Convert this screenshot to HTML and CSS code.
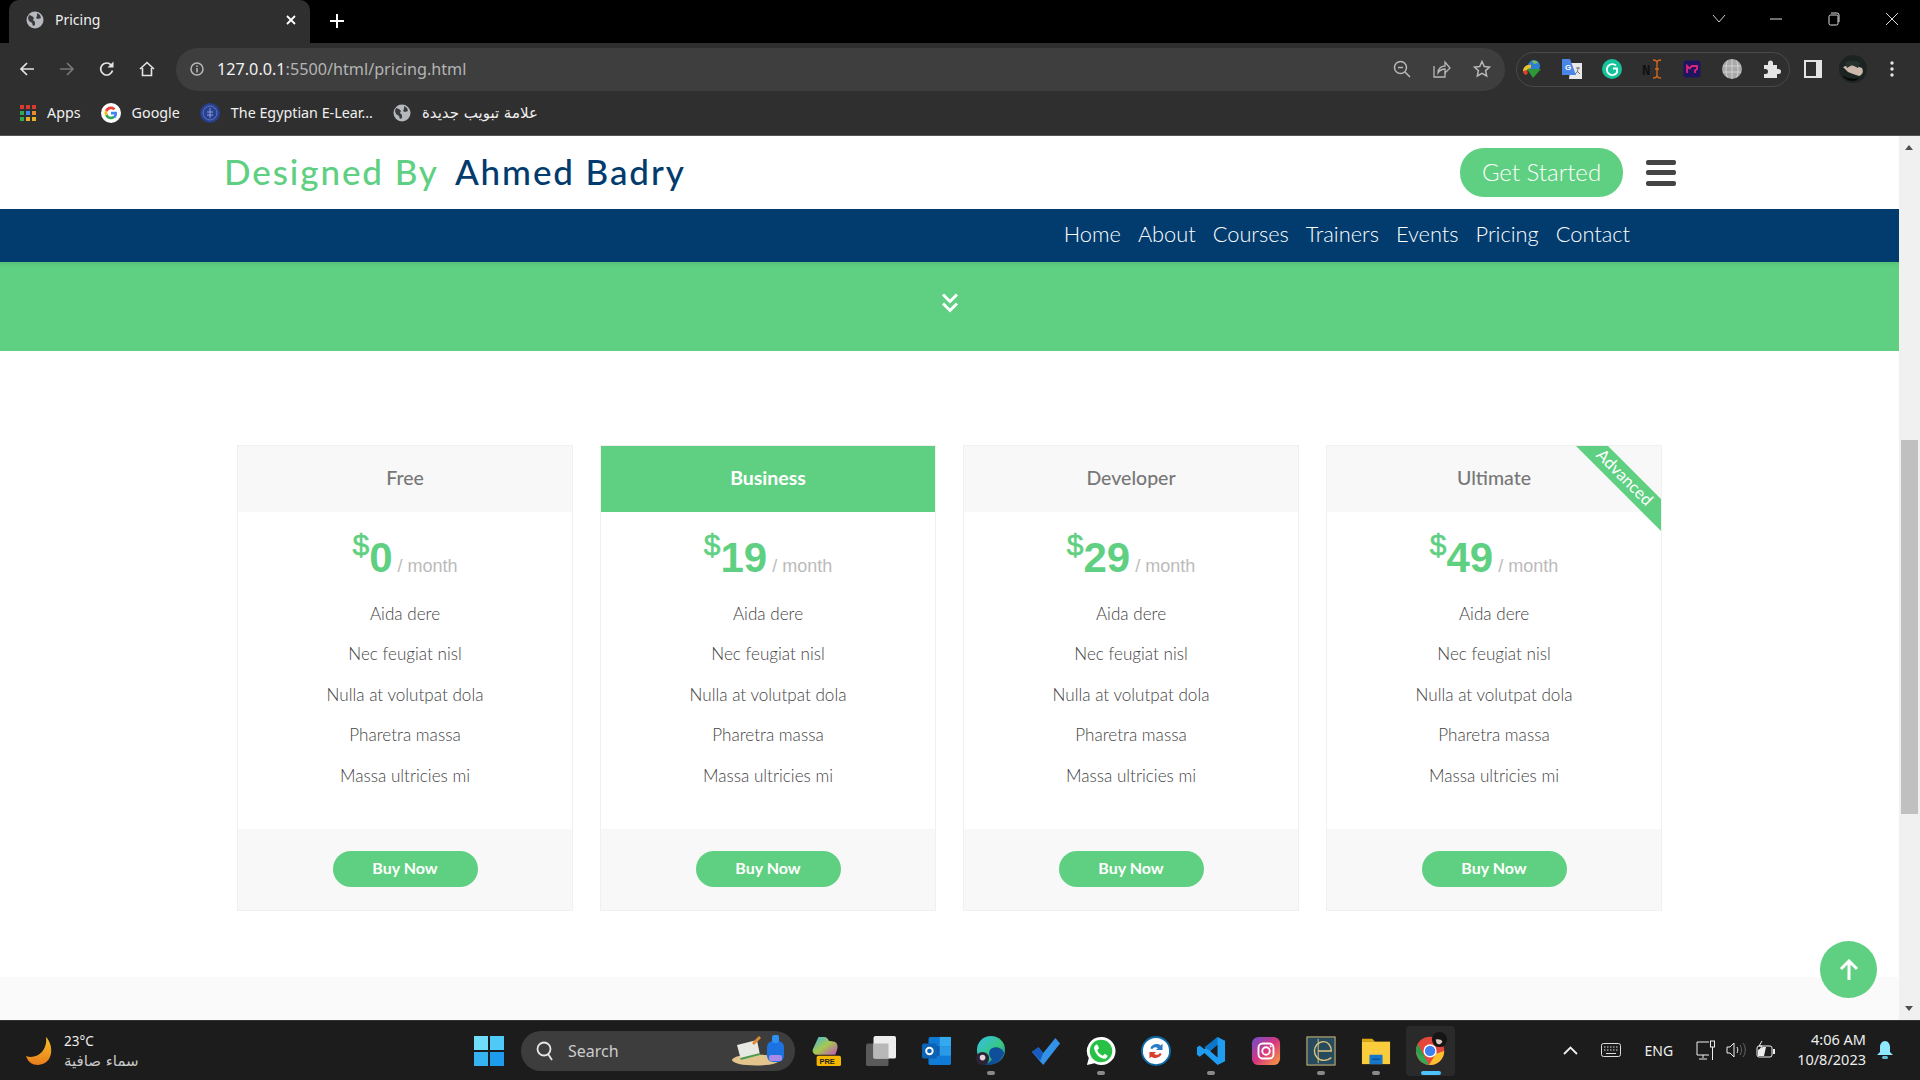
FILE: index.html
```html
<!DOCTYPE html>
<html lang="en">
<head>
    <meta charset="UTF-8">
    <meta name="viewport" content="width=device-width, initial-scale=1.0">
    <title>Pricing</title>
    <link rel="stylesheet" href="styles.css">
</head>
<body>
<div class="window">

    <!-- tab strip -->
    <div class="tabstrip">
        <div class="tab">
            <svg class="globe" width="18" height="18" viewBox="0 0 18 18"><circle cx="9" cy="9" r="8.5" fill="#b5b8bd"/><path d="M3 4l3 1 2 2-1 2 2 2v3l-2 1-1-3-3-2-1-3zM11 2l3 2 1 3-3 1-2-1 1-2z" fill="#3a3b3d"/></svg>
            <span class="tab-title">Pricing</span>
            <svg class="tab-close" width="12" height="12" viewBox="0 0 12 12"><path d="M2 2l8 8M10 2l-8 8" stroke="#fff" stroke-width="1.8"/></svg>
        </div>
        <svg class="new-tab" width="16" height="16" viewBox="0 0 16 16"><path d="M8 1v14M1 8h14" stroke="#fff" stroke-width="2"/></svg>
        <div class="window-btns">
            <svg width="14" height="10" viewBox="0 0 14 10"><path d="M1 1l6 7 6-7" fill="none" stroke="#ccc"/></svg>
            <svg width="12" height="2" viewBox="0 0 12 2"><path d="M0 1h12" stroke="#ddd"/></svg>
            <svg width="12" height="14" viewBox="0 0 12 14"><rect x="1" y="3" width="9" height="10" rx="1.5" fill="none" stroke="#ddd"/><path d="M3 1h6a2 2 0 0 1 2 2v7" fill="none" stroke="#ddd"/></svg>
            <svg width="12" height="12" viewBox="0 0 12 12"><path d="M0 0l12 12M12 0L0 12" stroke="#ddd"/></svg>
        </div>
    </div>

    <!-- toolbar -->
    <div class="toolbar">
        <div class="nav-btns">
            <svg width="16" height="16" viewBox="0 0 16 16"><path d="M15 8H2M8 2L2 8l6 6" fill="none" stroke="#e4e4e4" stroke-width="1.7"/></svg>
            <svg width="16" height="16" viewBox="0 0 16 16"><path d="M1 8h13M8 2l6 6-6 6" fill="none" stroke="#777" stroke-width="1.7"/></svg>
            <svg width="16" height="16" viewBox="0 0 16 16"><path d="M13.5 9.5A6 6 0 1 1 12 3.8" fill="none" stroke="#e4e4e4" stroke-width="1.7"/><path d="M14.5 0.5v6h-6z" fill="#e4e4e4"/></svg>
            <svg width="16" height="16" viewBox="0 0 16 16"><path d="M1 8l7-6.5L15 8M3.500 7v7.500h9V7" fill="none" stroke="#e4e4e4" stroke-width="1.6"/></svg>
        </div>
        <div class="omnibox">
            <svg width="14" height="14" viewBox="0 0 14 14"><circle cx="7" cy="7" r="6" fill="none" stroke="#b8b8b8" stroke-width="1.5"/><path d="M7 6v4.500M7 3.500V5" stroke="#b8b8b8" stroke-width="1.5"/></svg>
            <span class="url"><b>127.0.0.1</b>:5500/html/pricing.html</span>
            <div class="omni-icons">
                <svg width="18" height="18" viewBox="0 0 18 18"><circle cx="7.5" cy="7.5" r="6" fill="none" stroke="#b8b8b8" stroke-width="1.5"/><path d="M12 12l5 5M5 7.500h5" stroke="#b8b8b8" stroke-width="1.5"/></svg>
                <svg width="18" height="18" viewBox="0 0 18 18"><path d="M1 6v11h11v-4" fill="none" stroke="#b8b8b8" stroke-width="1.3"/><path d="M5 13c0-5 4-7 7-7V2l5 6-5 5V9c-3 0-5 1-7 4z" fill="none" stroke="#b8b8b8" stroke-width="1.3"/></svg>
                <svg width="18" height="18" viewBox="0 0 18 18"><path d="M9 1.500l2.300 5 5.200.6-3.900 3.500 1.100 5.400L9 13.300 4.300 16l1.100-5.400L1.500 7.100l5.200-.6z" fill="none" stroke="#b8b8b8" stroke-width="1.5"/></svg>
            </div>
        </div>
        <div class="ext-pill">
            <svg width="20" height="20" viewBox="0 0 20 20"><circle cx="12" cy="7" r="6" fill="#2f7fd0"/><path d="M10 2c2-1 5 0 6 2l-4 1z" fill="#7cc04b"/><path d="M1 12c0-4 4-7 8-6v3c-2 0-4 1-4 4z" fill="#e9c22c"/><path d="M1 12c0 2 1 3 3 4l2-2c-1-1-1-2-1-3z" fill="#d8432f"/><path d="M5 10h14l-8 9z" fill="#2e9a37"/></svg>
            <svg width="20" height="20" viewBox="0 0 20 20"><path d="M9 4h11v16H7z" fill="#e8e8e8"/><path d="M14 9h4M16 8v1c0 3-1 5-3 6M15 12l3 3" fill="none" stroke="#777"/><path d="M0 0h8l6 16H0z" fill="#4a86e8"/><text x="3" y="11" class="ext-letter">G</text></svg>
            <svg width="20" height="20" viewBox="0 0 20 20"><circle cx="10" cy="10" r="10" fill="#15c39a"/><path d="M14 6.500A5.500 5.500 0 1 0 15 13.500v-4h-4" fill="none" stroke="#fff" stroke-width="1.800"/></svg>
            <svg width="20" height="20" viewBox="0 0 20 20"><text x="0" y="16" class="ext-mono">N</text><path d="M11 1c2 0 4 1 4 3v12c0 2 2 3 4 3M19 1c-2 0-4 1-4 3M11 19c2 0 4-1 4-3M13 10h4" fill="none" stroke="#d9691e" stroke-width="1.300"/></svg>
            <svg width="20" height="20" viewBox="0 0 20 20"><rect x="1.500" y="1.500" width="17" height="17" rx="3" fill="#1e1560"/><path d="M5 14V7l2.500 2.500L10 7h5v3l-2 1.500V14" fill="none" stroke="#e0267a" stroke-width="1.800"/></svg>
            <svg width="20" height="20" viewBox="0 0 20 20"><circle cx="10" cy="10" r="10" fill="#a8a8a8"/><path d="M1 7h18M1 13h18M10 0v20M5.500 1.500c-2 5-2 12 0 17M14.500 1.500c2 5 2 12 0 17" fill="none" stroke="#dcdcdc" stroke-width=".8"/></svg>
            <svg width="20" height="20" viewBox="0 0 20 20"><path d="M2 6h4V4a2.500 2.500 0 0 1 5 0v2h4v4h1.500a2.500 2.500 0 0 1 0 5H15v4H2v-4h1.500a2.500 2.500 0 0 0 0-5H2z" fill="#e4e4e4"/></svg>
        </div>
        <svg class="side-panel" width="18" height="18" viewBox="0 0 18 18"><rect x="1" y="1" width="16" height="16" fill="none" stroke="#e4e4e4" stroke-width="2"/><rect x="12" y="1" width="5" height="16" fill="#e4e4e4"/></svg>
        <svg class="avatar" width="28" height="28" viewBox="0 0 28 28"><circle cx="14" cy="14" r="14" fill="#1c2421"/><path d="M4 12c6-3 13-2 19 1 2 4 0 7-3 8l-6-2-5-2z" fill="#cbb9ac"/><path d="M6 8c5-3 11-3 15 0l-2 5-6-3-5 3z" fill="#26332e"/><path d="M3 20c4 3 10 5 17 3-5 5-13 3-17-3z" fill="#060606"/></svg>
        <svg class="menu-dots" width="4" height="16" viewBox="0 0 4 16"><circle cx="2" cy="2" r="1.700" fill="#e4e4e4"/><circle cx="2" cy="8" r="1.700" fill="#e4e4e4"/><circle cx="2" cy="14" r="1.700" fill="#e4e4e4"/></svg>
    </div>

    <!-- bookmarks -->
    <div class="bookmarks">
        <div class="bookmark">
            <svg width="16" height="16" viewBox="0 0 16 16">
                <rect x="0" y="0" width="4" height="4" fill="#d93a2f"/><rect x="6" y="0" width="4" height="4" fill="#d93a2f"/><rect x="12" y="0" width="4" height="4" fill="#d93a2f"/>
                <rect x="0" y="6" width="4" height="4" fill="#33a853"/><rect x="6" y="6" width="4" height="4" fill="#4285f4"/><rect x="12" y="6" width="4" height="4" fill="#e88b2a"/>
                <rect x="0" y="12" width="4" height="4" fill="#33a853"/><rect x="6" y="12" width="4" height="4" fill="#e8b02a"/><rect x="12" y="12" width="4" height="4" fill="#e8b02a"/>
            </svg>
            <span>Apps</span>
        </div>
        <div class="bookmark">
            <svg width="20" height="20" viewBox="0 0 20 20"><circle cx="10" cy="10" r="10" fill="#fff"/><path d="M15.800 8.700H10v2.700h3.300a3.500 3.500 0 0 1-1.400 2.100l2.200 1.700c1.300-1.200 2-3 2-4.900z" fill="#4285f4"/><path d="M10 16.200c1.700 0 3.100-.6 4.100-1.500l-2.200-1.700a3.700 3.700 0 0 1-5.500-1.900L4.200 12.800a6.200 6.200 0 0 0 5.800 3.400z" fill="#34a853"/><path d="M6.400 11.100a3.700 3.700 0 0 1 0-2.300L4.200 7.100a6.200 6.200 0 0 0 0 5.700z" fill="#fbbc05"/><path d="M10 6.300c.9 0 1.800.3 2.500 1l1.900-1.900A6.200 6.200 0 0 0 4.200 7.100l2.200 1.700A3.700 3.700 0 0 1 10 6.300z" fill="#ea4335"/></svg>
            <span>Google</span>
        </div>
        <div class="bookmark">
            <svg width="20" height="20" viewBox="0 0 20 20"><circle cx="10" cy="10" r="10" fill="#27408f"/><circle cx="10" cy="10" r="7" fill="none" stroke="#6176bd"/><path d="M10 5v10M7 9h6M7 12h6" stroke="#8fa0d8"/></svg>
            <span>The Egyptian E-Lear...</span>
        </div>
        <div class="bookmark">
            <svg width="18" height="18" viewBox="0 0 18 18"><circle cx="9" cy="9" r="8.500" fill="#b5b8bd"/><path d="M3 4l3 1 2 2-1 2 2 2v3l-2 1-1-3-3-2-1-3zM11 2l3 2 1 3-3 1-2-1 1-2z" fill="#3a3b3d"/></svg>
            <span class="arabic bookmark-ar" dir="rtl">علامة تبويب جديدة</span>
        </div>
    </div>

    <!-- page -->
    <div class="viewport">
        <div class="page">
            <header class="site-header">
                <div class="logo"><span class="logo-green">Designed By</span><span class="logo-navy">Ahmed Badry</span></div>
                <div class="header-actions">
                    <a class="get-started">Get Started</a>
                    <div class="burger"><span></span><span></span><span></span></div>
                </div>
            </header>

            <nav class="site-nav">
                <a>Home</a><a>About</a><a>Courses</a><a>Trainers</a><a>Events</a><a>Pricing</a><a>Contact</a>
            </nav>

            <div class="breadcrumb-band">
                <svg width="18" height="20" viewBox="0 0 18 20"><path d="M2 1.500l7 7 7-7M2 10.500l7 7 7-7" fill="none" stroke="#fff" stroke-width="3"/></svg>
            </div>

            <section class="pricing">
                <div class="plan">
                    <h3 class="plan-name">Free</h3>
                    <div class="plan-price"><sup>$</sup><strong>0</strong><span> / month</span></div>
                    <ul class="plan-features">
                        <li>Aida dere</li><li>Nec feugiat nisl</li><li>Nulla at volutpat dola</li><li>Pharetra massa</li><li>Massa ultricies mi</li>
                    </ul>
                    <div class="plan-foot"><a class="buy">Buy Now</a></div>
                </div>
                <div class="plan featured">
                    <h3 class="plan-name">Business</h3>
                    <div class="plan-price"><sup>$</sup><strong>19</strong><span> / month</span></div>
                    <ul class="plan-features">
                        <li>Aida dere</li><li>Nec feugiat nisl</li><li>Nulla at volutpat dola</li><li>Pharetra massa</li><li>Massa ultricies mi</li>
                    </ul>
                    <div class="plan-foot"><a class="buy">Buy Now</a></div>
                </div>
                <div class="plan">
                    <h3 class="plan-name">Developer</h3>
                    <div class="plan-price"><sup>$</sup><strong>29</strong><span> / month</span></div>
                    <ul class="plan-features">
                        <li>Aida dere</li><li>Nec feugiat nisl</li><li>Nulla at volutpat dola</li><li>Pharetra massa</li><li>Massa ultricies mi</li>
                    </ul>
                    <div class="plan-foot"><a class="buy">Buy Now</a></div>
                </div>
                <div class="plan">
                    <div class="ribbon"><span>Advanced</span></div>
                    <h3 class="plan-name">Ultimate</h3>
                    <div class="plan-price"><sup>$</sup><strong>49</strong><span> / month</span></div>
                    <ul class="plan-features">
                        <li>Aida dere</li><li>Nec feugiat nisl</li><li>Nulla at volutpat dola</li><li>Pharetra massa</li><li>Massa ultricies mi</li>
                    </ul>
                    <div class="plan-foot"><a class="buy">Buy Now</a></div>
                </div>
            </section>

            <div class="next-section"></div>

            <a class="back-top">
                <svg width="20" height="22" viewBox="0 0 20 22"><path d="M10 21V3M2 10l8-8 8 8" fill="none" stroke="#fff" stroke-width="3"/></svg>
            </a>
        </div>

        <div class="scrollbar">
            <div class="arrow-up"></div>
            <div class="thumb"></div>
            <div class="arrow-down"></div>
        </div>
    </div>

    <!-- taskbar -->
    <div class="taskbar">
        <div class="weather">
            <svg width="28" height="30" viewBox="0 0 28 30"><defs><linearGradient id="moon" x1="0" y1="0" x2="0" y2="1"><stop offset="0" stop-color="#f6c026"/><stop offset="1" stop-color="#ea7d1c"/></linearGradient></defs><path d="M20 1c8 8 8 27-8 28C6 29 2 26 0 20c10 4 22-5 20-19z" fill="url(#moon)"/></svg>
            <div class="weather-text">
                <span>23°C</span>
                <span class="arabic weather-ar" dir="rtl">سماء صافية</span>
            </div>
        </div>

        <div class="task-center">
            <svg class="win-logo" width="30" height="30" viewBox="0 0 30 30"><rect width="14" height="14" fill="#6fdcfb"/><rect x="16" width="14" height="14" fill="#4fc9f8"/><rect y="16" width="14" height="14" fill="#35b3f3"/><rect x="16" y="16" width="14" height="14" fill="#1e9cec"/></svg>
            <div class="search">
                <svg width="18" height="20" viewBox="0 0 18 20"><circle cx="8" cy="8" r="6.500" fill="none" stroke="#e6e6e6" stroke-width="1.800"/><path d="M12 13l4 6" stroke="#e6e6e6" stroke-width="1.800"/></svg>
                <span>Search</span>
                <svg class="search-art" width="54" height="31" viewBox="0 0 54 31"><ellipse cx="24" cy="25" rx="24" ry="5.500" fill="#e3c48c"/><path d="M5 10l20-5 3 15-19 5z" fill="#e9e9e3"/><path d="M8 23l20-5v2L9 25z" fill="#4f9b4b"/><path d="M20 8l7-7 2 2-7 7z" fill="#e08a34"/><rect x="35" y="6" width="17" height="21" rx="6" fill="#1b72e0"/><rect x="40" y="0" width="7" height="8" rx="2" fill="#2e90f0"/><rect x="37" y="20" width="13" height="6" rx="2" fill="#a98ae6"/></svg>
            </div>
            <div class="task-icons">
                <div class="task-icon">
                    <svg width="32" height="32" viewBox="0 0 32 32"><defs><linearGradient id="cop" x1="0" y1="0" x2="1" y2="1"><stop offset="0" stop-color="#3fb7e8"/><stop offset=".5" stop-color="#a7c94e"/><stop offset="1" stop-color="#c34fc0"/></linearGradient></defs><path d="M8 1h6c3 0 4 2 5 4l6 1c3 1 4 4 3 8l-2 6H7c-4 0-6-3-5-6z" fill="url(#cop)"/><rect x="6" y="21" width="26" height="11" rx="2" fill="#f5b800"/><text x="9" y="30" class="pre-text">PRE</text></svg>
                </div>
                <div class="task-icon">
                    <svg width="32" height="32" viewBox="0 0 32 32"><rect y="8" width="24" height="24" rx="2" fill="#5a5a5a"/><rect x="8" width="24" height="24" rx="2" fill="#ededed"/><rect x="8" y="8" width="16" height="16" fill="#b8b8b8"/></svg>
                </div>
                <div class="task-icon">
                    <svg width="32" height="32" viewBox="0 0 32 32"><rect x="8" y="1" width="24" height="30" rx="2" fill="#0f7bd6"/><rect x="20" y="1" width="12" height="10" fill="#35a9ee"/><rect x="8" y="11" width="12" height="10" fill="#0a5ea8"/><rect x="20" y="11" width="12" height="10" fill="#2a9ae6"/><rect x="1" y="8" width="16" height="16" rx="2" fill="#0c63b4"/><circle cx="9" cy="16" r="3.500" fill="none" stroke="#fff" stroke-width="2"/></svg>
                </div>
                <div class="task-icon running">
                    <svg width="32" height="32" viewBox="0 0 32 32"><defs><linearGradient id="edge" x1="0" y1="0" x2="1" y2="1"><stop offset="0" stop-color="#34c0e8"/><stop offset=".6" stop-color="#38c77d"/><stop offset="1" stop-color="#1466b8"/></linearGradient></defs><circle cx="16" cy="15" r="15" fill="url(#edge)"/><path d="M30 18c-3-6-9-7-13-5s-4 8 0 12c-4 5-9 5-9 5 8 2 18 0 22-12z" fill="#0f4f99"/><circle cx="7" cy="24" r="7" fill="#2a2436"/><circle cx="7" cy="23" r="3" fill="#e8d4dc"/></svg>
                </div>
                <div class="task-icon">
                    <svg width="32" height="32" viewBox="0 0 32 32"><path d="M1 17l7-5 5 6L26 2l5 6-18 23z" fill="#3391e6"/><path d="M1 17l7-5 5 6-3 8z" fill="#185abd"/></svg>
                </div>
                <div class="task-icon running">
                    <svg width="32" height="32" viewBox="0 0 32 32"><path d="M16 1a15 15 0 0 0-13 22.500L1 31l8-2A15 15 0 1 0 16 1z" fill="#fff"/><circle cx="16" cy="16" r="12" fill="#28c145"/><path d="M11 9c-2 1-3 3-2 6 2 5 5 8 9 9 3 1 5-1 5-3l-3-2-2 2c-3-1-5-3-6-6l2-2-2-4z" fill="#fff"/></svg>
                </div>
                <div class="task-icon">
                    <svg width="32" height="32" viewBox="0 0 32 32"><circle cx="16" cy="16" r="15" fill="#fff" stroke="#0d6aa8" stroke-width="2"/><path d="M10 13c1-4 7-6 11-3l2-2v7h-7l2-2c-2-2-5-1-6 1z" fill="#2b7cc4"/><path d="M22 19c-1 4-7 6-11 3l-2 2v-7h7l-2 2c2 2 5 1 6-1z" fill="#d9402e"/></svg>
                </div>
                <div class="task-icon running">
                    <svg width="32" height="32" viewBox="0 0 32 32"><path d="M23 1l8 4v22l-8 4L9 18l-5 4-3-2v-8l3-2 5 4zM23 9l-8 7 8 7z" fill="#1f9cf0"/><path d="M23 1v8l-8 7-6-4z" fill="#0c77c9"/></svg>
                </div>
                <div class="task-icon">
                    <svg width="32" height="32" viewBox="0 0 32 32"><defs><linearGradient id="insta" x1="0" y1="0" x2="1" y2="1"><stop offset="0" stop-color="#6a4fd0"/><stop offset=".5" stop-color="#d9367f"/><stop offset="1" stop-color="#f7a23a"/></linearGradient></defs><rect x="1" y="1" width="30" height="30" rx="7" fill="url(#insta)"/><rect x="8" y="8" width="16" height="16" rx="4.500" fill="none" stroke="#fff" stroke-width="2"/><circle cx="16" cy="16" r="4" fill="none" stroke="#fff" stroke-width="2"/><circle cx="21" cy="11" r="1.200" fill="#fff"/></svg>
                </div>
                <div class="task-icon running">
                    <svg width="32" height="32" viewBox="0 0 32 32"><rect x="1" y="1" width="30" height="30" fill="#274a5c" stroke="#dcc57e"/><path d="M13 3v26" stroke="#dcc57e"/><path d="M13 16h14c0-6-4-10-8-10-6 0-10 5-10 10s4 10 10 10c3 0 6-1 8-3" fill="none" stroke="#dcc57e" stroke-width="1.500"/></svg>
                </div>
                <div class="task-icon running">
                    <svg width="32" height="32" viewBox="0 0 32 32"><path d="M1 3h11l3 3H1z" fill="#e0a80f"/><rect x="1" y="6" width="30" height="24" fill="#fbcd3d"/><rect x="9" y="20" width="14" height="10" rx="1" fill="#1577c9"/><rect x="12" y="24" width="8" height="1.500" fill="#0c4f8c"/></svg>
                </div>
                <div class="task-icon active">
                    <svg width="36" height="36" viewBox="0 0 36 36"><circle cx="17" cy="20" r="15" fill="#e5483a"/><path d="M4 13l7 13 5 9A15 15 0 0 1 4 13z" fill="#34a853"/><path d="M32 20a15 15 0 0 1-16 15l7-12z" fill="#fbc02d"/><path d="M2 20a15 15 0 0 1 2-7l7 13A15 15 0 0 1 2 20z" fill="#2f9c4a"/><circle cx="17" cy="20" r="7" fill="#fff"/><circle cx="17" cy="20" r="5.500" fill="#3b82f0"/><circle cx="27" cy="8" r="8" fill="#151515"/><path d="M23 8c3-1 6 0 7 2-1 3-4 4-6 2z" fill="#d9c8bd"/></svg>
                </div>
            </div>
        </div>

        <div class="tray">
            <svg class="tray-chevron" width="15" height="9" viewBox="0 0 15 9"><path d="M1 8l6.500-6.500L14 8" fill="none" stroke="#eee" stroke-width="1.800"/></svg>
            <svg class="tray-keyboard" width="20" height="14" viewBox="0 0 20 14"><rect x=".5" y=".5" width="19" height="13" rx="2" fill="none" stroke="#ddd"/><path d="M3 4h14M3 7h14" stroke="#ddd" stroke-dasharray="1.500 1.500"/><path d="M5 10.500h10" stroke="#ddd"/></svg>
            <span class="lang">ENG</span>
            <svg class="tray-net" width="20" height="21" viewBox="0 0 20 21"><path d="M13 2H1v13h12M7 15v3M3 19h8" fill="none" stroke="#eee"/><rect x="14.500" y="1" width="4" height="6" fill="none" stroke="#eee"/><path d="M16.500 7v13" stroke="#eee"/></svg>
            <svg class="tray-sound" width="20" height="16" viewBox="0 0 20 16"><path d="M1 5h3l4-4v14l-4-4H1z" fill="none" stroke="#eee"/><path d="M11 5c1 2 1 4 0 6" fill="none" stroke="#eee"/><path d="M14 3c2 3 2 7 0 10M17 1c3 4 3 10 0 14" fill="none" stroke="#666"/></svg>
            <svg class="tray-battery" width="20" height="18" viewBox="0 0 20 18"><rect x="1" y="5" width="15" height="11" rx="2" fill="none" stroke="#eee"/><path d="M17 8h2v5h-2z" fill="#eee"/><path d="M2 15V9l5-3h3l-2 9z" fill="#eee"/><path d="M6 0L3 5h3L4 9" fill="none" stroke="#eee"/></svg>
            <div class="clock"><span>4:06 AM</span><span>10/8/2023</span></div>
            <svg width="16" height="19" viewBox="0 0 16 19"><path d="M8 0c3 0 5 3 5 6v5l3 3H0l3-3V6c0-3 2-6 5-6z" fill="#8fe8ff"/><rect x="5" y="15" width="6" height="3" rx="1.500" fill="#5bbfdc"/></svg>
        </div>
    </div>

</div>
</body>
</html>
```

FILE: styles.css
```css
* {
    box-sizing: border-box;
}

html, body {
    margin: 0;
    height: 100%;
    overflow: hidden;
}

body {
    font-family: "Noto Sans", sans-serif;
}

a {
    cursor: pointer;
}

svg {
    flex-shrink: 0;
    display: block;
}

.arabic {
    font-family: "DejaVu Sans", "Noto Sans", sans-serif;
}

.window {
    display: flex;
    flex-direction: column;
    width: 1920px;
    height: 1080px;
}

/* browser chrome */
.tabstrip {
    display: flex;
    align-items: flex-end;
    height: 43px;
    background: #000;
    flex: none;
}

.tab {
    display: flex;
    align-items: center;
    width: 301px;
    height: 43px;
    margin-left: 9px;
    padding: 0 13px 4px 17px;
    background: #2f2f2f;
    border-radius: 10px 10px 0 0;
    color: #f0f0f0;
    font-size: 14px;
}

.tab-title {
    margin-left: 11px;
    flex: 1;
}

.new-tab {
    margin: 0 0 14px 19px;
}

.window-btns {
    display: flex;
    align-items: center;
    margin-left: auto;
    height: 38px;
    align-self: flex-start;
}

.window-btns svg {
    margin-right: 46px;
}

.window-btns svg:first-child {
    margin-right: 44px;
}

.window-btns svg:last-child {
    margin-right: 22px;
}

.toolbar {
    display: flex;
    align-items: center;
    height: 49px;
    padding-top: 3px;
    background: #2f2f2f;
    flex: none;
}

.nav-btns {
    display: flex;
    gap: 24px;
    width: 176px;
    padding-left: 19px;
}

.omnibox {
    display: flex;
    align-items: center;
    width: 1329px;
    height: 43px;
    padding: 0 14px;
    background: #3e3e3e;
    border-radius: 22px;
    color: #b4b4b4;
    margin-right: 11px;
}

.url {
    margin-left: 13px;
    font-size: 16.2px;
}

.url b {
    font-weight: 400;
    color: #f2f2f2;
}

.omni-icons {
    display: flex;
    gap: 22px;
    margin-left: auto;
}

.ext-pill {
    display: flex;
    align-items: center;
    gap: 20px;
    width: 274px;
    height: 35px;
    padding-left: 5px;
    border: 1px solid #4a4a4a;
    border-radius: 18px;
    flex: none;
}

.side-panel {
    margin-left: 14px;
}

.avatar {
    margin-left: 17px;
}

.menu-dots {
    margin-left: 23px;
}

.ext-letter {
    font: 700 8px "Liberation Sans", sans-serif;
    fill: #fff;
}

.ext-mono {
    font: 700 14px "Liberation Mono", monospace;
    fill: #111;
}

.bookmarks {
    display: flex;
    align-items: center;
    gap: 20px;
    height: 44px;
    padding: 0 0 2px 20px;
    background: #2f2f2f;
    border-bottom: 1px solid #555;
    color: #f0f0f0;
    font-size: 14.3px;
    flex: none;
}

.bookmark {
    display: flex;
    align-items: center;
    gap: 11px;
}

.bookmark-ar {
    font-size: 15px;
}

/* page */
.viewport {
    display: flex;
    height: 884px;
    flex: none;
    overflow: hidden;
}

.page {
    position: relative;
    display: flex;
    flex-direction: column;
    width: 1899px;
    height: 884px;
    background: #fff;
    font-family: Lato, sans-serif;
}

.site-header {
    display: flex;
    align-items: center;
    justify-content: space-between;
    height: 73px;
    padding: 0 223px 0 224px;
    flex: none;
}

.logo {
    display: flex;
    gap: 16px;
    font-size: 35px;
    font-weight: 500;
    letter-spacing: 1.9px;
    padding-bottom: 4px;
}

.logo-green {
    color: #5fd082;
}

.logo-navy {
    color: #023b6d;
}

.header-actions {
    display: flex;
    align-items: center;
    gap: 23px;
}

.get-started {
    display: flex;
    align-items: center;
    justify-content: center;
    width: 163px;
    height: 49px;
    padding-bottom: 2px;
    background: #5fd082;
    border-radius: 24px;
    color: #fff;
    font-size: 24px;
    font-weight: 300;
}

.burger {
    display: flex;
    flex-direction: column;
    gap: 5.5px;
    width: 30px;
}

.burger span {
    height: 5px;
    background: #444;
    border-radius: 2px;
}

.site-nav {
    display: flex;
    justify-content: flex-end;
    align-items: center;
    gap: 17px;
    height: 53px;
    padding: 0 269px 4px 0;
    background: #023b6d;
    flex: none;
}

.site-nav a {
    color: #fff;
    font-size: 21.8px;
    font-weight: 300;
}

.breadcrumb-band {
    display: flex;
    align-items: center;
    justify-content: center;
    height: 89px;
    padding-bottom: 8px;
    background: #5fd082;
    box-shadow: inset 0 6px 6px -6px rgba(0, 0, 0, 0.15);
    flex: none;
}

/* pricing cards */
.pricing {
    display: flex;
    gap: 27px;
    padding: 94px 0 0 237px;
    height: 626px;
    flex: none;
}

.plan {
    position: relative;
    display: flex;
    flex-direction: column;
    width: 336px;
    height: 466px;
    border: 1px solid #f0f0f0;
}

.plan-name {
    margin: 0;
    height: 66px;
    padding-bottom: 1px;
    line-height: 64px;
    background: #f8f8f8;
    color: #777;
    font-size: 19.5px;
    font-weight: 500;
    text-align: center;
    flex: none;
}

.featured .plan-name {
    background: #5fd082;
    color: #fff;
    font-weight: 700;
}

.plan-price {
    height: 67px;
    margin-top: 12px;
    margin-bottom: 3px;
    text-align: center;
    color: #bbb;
    font-family: "Liberation Sans", sans-serif;
    font-size: 18px;
    line-height: 67px;
    white-space: nowrap;
}

.plan-price sup {
    position: relative;
    top: -10px;
    color: #5fd082;
    font-size: 30px;
    font-weight: 400;
    vertical-align: super;
    line-height: 0;
    -webkit-text-stroke: 0.6px #5fd082;
}

.plan-price strong {
    color: #5fd082;
    font-size: 42px;
    font-weight: 700;
}

.plan-features {
    margin: 0;
    padding: 0;
    list-style: none;
    text-align: center;
    color: #444;
    font-size: 17.1px;
    font-weight: 300;
    flex: 1;
}

.plan-features li {
    height: 40.4px;
    line-height: 40.4px;
}

.plan-foot {
    display: flex;
    justify-content: center;
    align-items: center;
    height: 81px;
    padding-bottom: 1px;
    background: #f8f8f8;
    flex: none;
}

.buy {
    display: flex;
    align-items: center;
    justify-content: center;
    width: 145px;
    height: 36px;
    padding-bottom: 3px;
    background: #5fd082;
    border-radius: 18px;
    color: #fff;
    font-size: 16px;
    font-weight: 700;
}

.ribbon {
    position: absolute;
    top: 0;
    right: 0;
    width: 85px;
    height: 85px;
    background: #5fd082;
    clip-path: polygon(0 0, 32px 0, 85px 53px, 85px 85px);
}

.ribbon span {
    position: absolute;
    top: 20px;
    left: 6px;
    width: 85px;
    height: 23px;
    line-height: 23px;
    color: #fff;
    font-size: 16.5px;
    text-align: center;
    transform: rotate(45deg);
}

.next-section {
    flex: 1;
    background: #fafafa;
}

.back-top {
    position: absolute;
    top: 805px;
    left: 1820px;
    display: flex;
    align-items: center;
    justify-content: center;
    width: 57px;
    height: 57px;
    background: #5fd082;
    border-radius: 50%;
}

/* scrollbar */
.scrollbar {
    position: relative;
    width: 21px;
    height: 884px;
    background: #f0f0f0;
    flex: none;
}

.arrow-up, .arrow-down {
    position: absolute;
    left: 6px;
    width: 0;
    height: 0;
    border-left: 4.5px solid transparent;
    border-right: 4.5px solid transparent;
}

.arrow-up {
    top: 9px;
    border-bottom: 5px solid #505050;
}

.arrow-down {
    bottom: 9px;
    border-top: 5px solid #505050;
}

.thumb {
    position: absolute;
    top: 304px;
    left: 2px;
    width: 17px;
    height: 374px;
    background: #c0c0c0;
}

/* taskbar */
.taskbar {
    position: relative;
    display: flex;
    align-items: center;
    height: 60px;
    background: #1c1c1c;
    border-top: 1px solid #333;
    color: #eee;
    flex: none;
}

.weather {
    display: flex;
    align-items: center;
    gap: 10px;
    width: 474px;
    padding-left: 26px;
}

.weather-text {
    display: flex;
    flex-direction: column;
    font-size: 13.5px;
    line-height: 20px;
    align-items: flex-start;
}

.weather-ar {
    color: #c8c8c8;
    font-size: 15px;
}

.task-center {
    display: flex;
    align-items: center;
}

.win-logo {
    margin-right: 17px;
}

.search {
    display: flex;
    align-items: center;
    gap: 14px;
    width: 274px;
    height: 40px;
    padding: 0 9px 0 15px;
    background: #3d3d3d;
    border-radius: 20px;
    color: #ccc;
    font-size: 16px;
}

.search-art {
    margin-left: auto;
}

.task-icons {
    display: flex;
    align-items: center;
    margin-left: 3px;
}

.task-icon {
    position: relative;
    display: flex;
    align-items: center;
    justify-content: center;
    width: 55px;
    height: 50px;
}

.task-icon svg {
    width: 30px;
    height: 30px;
}

.task-icon.running::after {
    content: "";
    position: absolute;
    bottom: 1px;
    left: 50%;
    width: 8px;
    height: 4px;
    margin-left: -4px;
    background: #8a8a8a;
    border-radius: 2px;
}

.task-icon.active {
    width: 49px;
    margin: 0 3px;
    background: #2a2a2a;
    border-radius: 4px;
}

.task-icon.active svg {
    width: 34px;
    height: 34px;
    margin-bottom: 4px;
}

.task-icon.active::after {
    content: "";
    position: absolute;
    bottom: 1px;
    left: 50%;
    width: 20px;
    height: 4px;
    margin-left: -10px;
    background: #4cc2ff;
    border-radius: 2px;
}

.pre-text {
    font: 700 8px "Liberation Sans", sans-serif;
    fill: #222;
}

.tray {
    display: flex;
    align-items: center;
    position: absolute;
    right: 27px;
    top: 0;
    height: 59px;
    padding-bottom: 1px;
}

.tray-chevron {
    margin-right: 23px;
}

.tray-keyboard {
    margin-right: 24px;
}

.lang {
    margin-right: 23px;
    font-size: 14px;
}

.tray-net, .tray-sound {
    margin-right: 10px;
}

.tray-battery {
    margin-right: 21px;
}

.clock {
    display: flex;
    flex-direction: column;
    align-items: flex-end;
    font-size: 14.5px;
    line-height: 20px;
    margin-right: 11px;
    padding-bottom: 3px;
}
```
